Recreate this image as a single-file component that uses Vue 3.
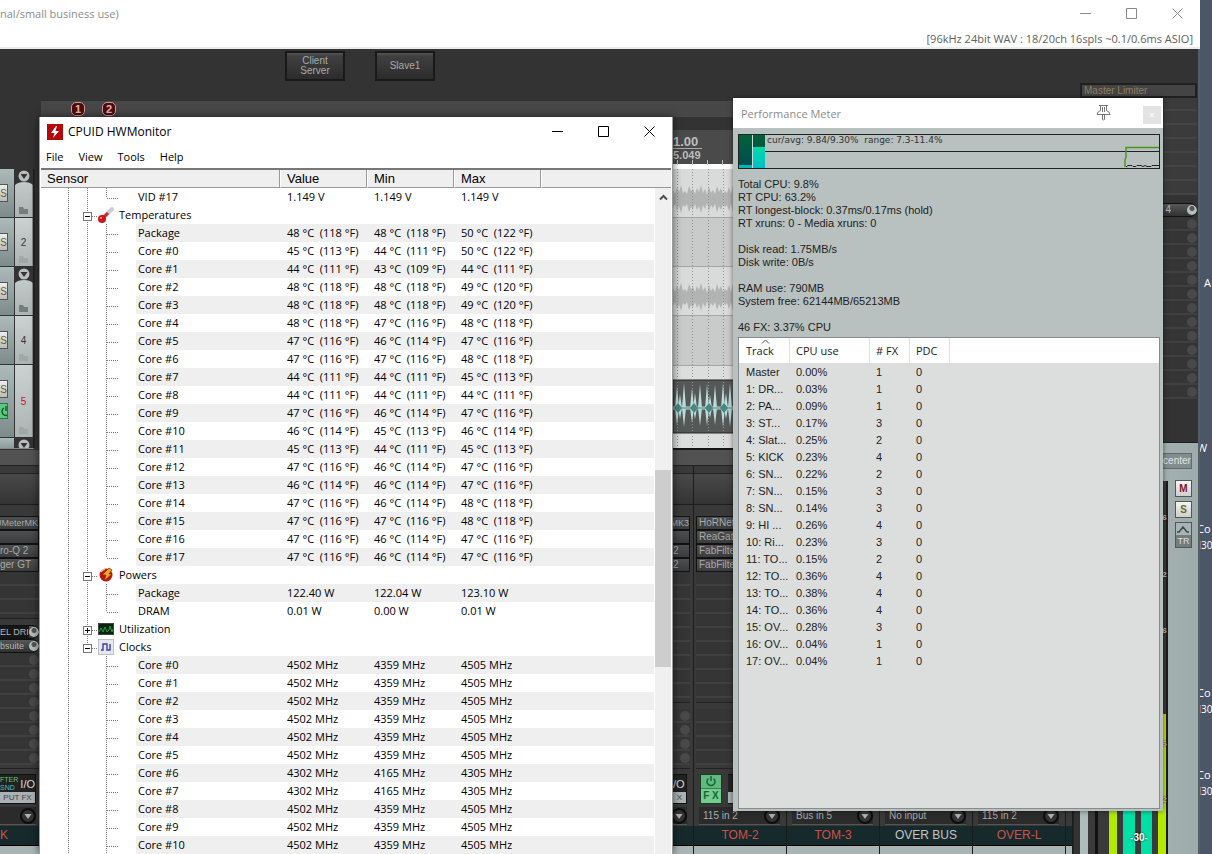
<script setup>
const temps = [
  ['Package', 48, 48, 50], ['Core #0', 45, 44, 50], ['Core #1', 44, 43, 44], ['Core #2', 48, 48, 49],
  ['Core #3', 48, 48, 49], ['Core #4', 48, 47, 48], ['Core #5', 47, 46, 47], ['Core #6', 47, 47, 48],
  ['Core #7', 44, 44, 45], ['Core #8', 44, 44, 44], ['Core #9', 47, 46, 47], ['Core #10', 46, 45, 46],
  ['Core #11', 45, 44, 45], ['Core #12', 47, 46, 47], ['Core #13', 46, 46, 47], ['Core #14', 47, 46, 48],
  ['Core #15', 47, 47, 48], ['Core #16', 47, 46, 47], ['Core #17', 47, 46, 47]
]
const fahrenheit = { 43: 109, 44: 111, 45: 113, 46: 114, 47: 116, 48: 118, 49: 120, 50: 122 }
const degrees = c => `${c} °C  (${fahrenheit[c]} °F)`
const clocks = Array.from({ length: 11 }, (_, i) => {
  const slow = i === 6 || i === 7
  return [`Core #${i}`, slow ? '4302 MHz' : '4502 MHz', slow ? '4165 MHz' : '4359 MHz', slow ? '4305 MHz' : '4505 MHz']
})

const leaves = (items, inner, open = false) =>
  items.map((values, i) => ({ values, shade: i % 2 === 0, inner, last: !open && i === items.length - 1 }))

const sensors = [
  { values: ['VID #17', '1.149 V', '1.149 V', '1.149 V'], inner: true, last: true },
  { group: 'Temperatures', icon: 'temp' },
  ...leaves(temps.map(t => [t[0], ...t.slice(1).map(degrees)]), true),
  { group: 'Powers', icon: 'power' },
  ...leaves([['Package', '122.40 W', '122.04 W', '123.10 W'], ['DRAM', '0.01 W', '0.00 W', '0.01 W']], true),
  { group: 'Utilization', icon: 'util', closed: true },
  { group: 'Clocks', icon: 'clock', end: true },
  ...leaves(clocks, false, true)
]

const stats = [
  'Total CPU: 9.8%', 'RT CPU: 63.2%', 'RT longest-block: 0.37ms/0.17ms (hold)', 'RT xruns: 0 - Media xruns: 0', '',
  'Disk read: 1.75MB/s', 'Disk write: 0B/s', '', 'RAM use: 790MB', 'System free: 62144MB/65213MB', '', '46 FX: 3.37% CPU'
]
const tracks = [
  ['Master', '0.00%', 1], ['1: DR...', '0.03%', 1], ['2: PA...', '0.09%', 1], ['3: ST...', '0.17%', 3],
  ['4: Slat...', '0.25%', 2], ['5: KICK', '0.23%', 4], ['6: SN...', '0.22%', 2], ['7: SN...', '0.15%', 3],
  ['8: SN...', '0.14%', 3], ['9: HI ...', '0.26%', 4], ['10: Ri...', '0.23%', 3], ['11: TO...', '0.15%', 2],
  ['12: TO...', '0.36%', 4], ['13: TO...', '0.38%', 4], ['14: TO...', '0.36%', 4], ['15: OV...', '0.28%', 3],
  ['16: OV...', '0.04%', 1], ['17: OV...', '0.04%', 1]
]

const strips = [
  { kind: 'first', fx: ['UMeterMK', '', 'ro-Q 2', 'ger GT'], sends: ['EL DRI', 'bsuite'], knobs: 8, name: 'K', red: true, input: '' },
  { kind: 'gap' },
  { kind: 'cut', fx: ['rMK3', '', '2', '2'], sends: [], knobs: 4, name: '', input: '' },
  { kind: 'full', fx: ['HoRNetVU', 'ReaGate', 'FabFilter', 'FabFilter'], sends: [], knobs: 4, name: 'TOM-2', red: true, input: '115 in 2' },
  { kind: 'full', fx: [], sends: [], knobs: 4, name: 'TOM-3', red: true, input: 'Bus in 5' },
  { kind: 'full', fx: [], sends: [], knobs: 4, name: 'OVER BUS', input: 'No input' },
  { kind: 'full', fx: [], sends: [], knobs: 4, name: 'OVER-L', red: true, input: '115 in 2' },
  { kind: 'edge' }
]

const tcp = [
  { kind: 'folder' }, { kind: 'plain', n: '2' }, { kind: 'folder' }, { kind: 'plain', n: '4' },
  { kind: 'armed', n: '5' }, { kind: 'stub' }
]

const heights = [9, 5, 12, 7, 14, 6, 8, 5, 13, 8, 10, 5, 11, 7, 14, 6, 10, 4, 12, 6, 9, 5, 13, 7, 11, 5, 8, 6, 12, 5, 14]
const wave = mid => {
  const top = heights.map((h, i) => `${i * 2},${mid - h}`)
  const bottom = heights.map((h, i) => `${i * 2},${mid + h}`).reverse()
  return [...top, ...bottom].join(' ')
}
const spikes = [[4, 22], [7, 14], [11, 25], [19, 20], [22, 15], [27, 24], [34, 24], [37, 13], [42, 23], [50, 25], [53, 15], [57, 25], [65, 20]]
const kick = spikes.map(([x, h]) => `M${x - 2},239 L${x},${239 - h} L${x + 2},239 L${x},${Math.round(239 + h * 0.75)} Z`).join(' ')
const hits = [5, 21, 36, 51].map(x => `M${x - 4},239 L${x},234 L${x + 4},239 L${x},244 Z`).join(' ')
</script>

<template>
  <div class="desktop">
    <span class="icon-label l1">A</span>
    <span class="icon-label l2">W</span>
    <span class="icon-label l3">Co<br><small>M30</small></span>
    <span class="icon-label l4">Co<br><small>M30</small></span>
    <span class="icon-label l5">Co<br><small>M30</small></span>

    <section class="daw">
      <header class="daw-title">
        <span>nal/small business use)</span>
        <div class="win-buttons">
          <button aria-label="Minimize"><svg width="11" height="11"><path d="M0 5.5H11" /></svg></button>
          <button aria-label="Maximize"><svg width="11" height="11"><path d="M.5.5H10.5V10.5H.5Z" /></svg></button>
          <button aria-label="Close"><svg width="11" height="11"><path d="M.5.5L10.5 10.5M10.5.5L.5 10.5" /></svg></button>
        </div>
      </header>
      <div class="daw-status">[96kHz 24bit WAV : 18/20ch 16spls ~0.1/0.6ms ASIO]</div>

      <div class="daw-body">
        <div class="main">
          <div class="toolbar">
            <button class="tool">Client<br>Server</button>
            <button class="tool">Slave1</button>
          </div>
          <div class="markers">
            <span class="marker">1</span>
            <span class="marker">2</span>
          </div>
          <div class="ruler">
            <div class="ruler-face">
              <b>1.00</b>
              <b class="time">5.049</b>
            </div>
          </div>
          <div class="arrange">
            <div class="tcp">
              <div v-for="(t, i) in tcp" :key="i" class="tcp-row" :class="t.kind">
                <div class="tcp-left">
                  <button v-if="t.kind !== 'stub'" class="solo">S</button>
                  <button v-if="t.kind === 'armed'" class="power" aria-label="FX power">
                    <svg width="12" height="12"><path d="M4 3A4 4 0 1 0 8 3M6 1V6" fill="none" stroke="#0a5b22" stroke-width="1.4" /></svg>
                  </button>
                </div>
                <div class="tcp-num">
                  <svg v-if="t.kind === 'folder' || t.kind === 'stub'" class="fold" width="18" height="16">
                    <path d="M0 0H18V16Q15 13 9 13Q3 13 0 16Z" fill="#333" />
                    <circle cx="9" cy="7" r="5.5" fill="#b9bdbd" /><path d="M5.500 5H12.500L9 10Z" fill="#333" />
                  </svg>
                  <span>{{ t.n }}</span>
                  <svg v-if="t.kind !== 'stub'" class="dir" width="9" height="7"><path d="M0 0H4L5 2H9V7H0Z" /></svg>
                </div>
              </div>
            </div>
            <svg class="items" width="100%" height="281" aria-hidden="true">
              <rect width="100%" height="281" fill="#c9cbcb" />
              <rect width="100%" height="48" fill="#d9dbdb" /><rect y="98" width="100%" height="48" fill="#d9dbdb" />
              <rect y="196" width="100%" height="85" fill="#dcdede" />
              <path d="M0 48.500H600M0 97.500H600M0 146.500H600M0 196.500H600" stroke="#a4a6a6" />
              <polygon :points="wave(30)" fill="#b2b4b4" /><polygon :points="wave(128)" fill="#b2b4b4" />
              <rect y="211" width="100%" height="53" fill="#565858" stroke="#222" />
              <path d="M4.500 0V281M19.500 0V281M35.500 0V281M50.500 0V281" stroke="#8e9090" stroke-dasharray="1 2" />
              <path d="M0 239H80" stroke="#b8dcd9" stroke-width="3" />
              <path :d="kick" fill="#b8dcd9" />
              <path d="M0 239H80" stroke="#4a8583" />
              <path :d="hits" fill="#4a8583" />
              <path d="M0 280H600" stroke="#161616" stroke-width="2" />
            </svg>
          </div>
          <div class="hscroll"></div>

          <div class="mixer">
            <div v-for="(s, i) in strips" :key="i" class="strip" :class="s.kind">
              <template v-if="s.fx">
                <div class="strip-head"></div>
                <div class="slots">
                  <div v-for="(f, k) in s.fx" :key="k" class="slot">{{ f }}</div>
                </div>
                <div class="sends">
                  <div v-for="f in s.sends" :key="f" class="send used"><span>{{ f }}</span><i></i></div>
                  <div v-for="k in s.knobs" :key="k" class="send"><i></i></div>
                </div>
                <div class="io">
                  <template v-if="s.kind === 'full'">
                    <button class="fx-on">
                      <svg width="12" height="11"><path d="M3.500 2.500A4 4 0 1 0 8.500 2.500M6 0V5" fill="none" stroke="#0d6a35" stroke-width="1.500" /></svg>
                      <span>F X</span>
                    </button>
                    <div class="io-box"></div>
                  </template>
                  <div v-else class="io-box">
                    <div class="io-top">
                      <span v-if="s.kind === 'first'" class="snd"><em>FTER</em><br>SND</span>
                      <span>{{ s.kind === 'first' ? 'I/O' : '/O' }}</span>
                    </div>
                    <div class="input-fx">{{ s.kind === 'first' ? 'PUT FX' : 'X' }}</div>
                  </div>
                </div>
                <div class="input">
                  <button><span>{{ s.input }}</span>
                    <svg width="16" height="16"><circle cx="8" cy="8" r="7" fill="#333" stroke="#0c0c0c" stroke-width="2" /><path d="M4.500 6H11.500L8 11Z" fill="#b0b0b0" /></svg>
                  </button>
                </div>
                <div class="name" :class="{ red: s.red }">{{ s.name }}</div>
                <div class="foot"></div>
              </template>
              <template v-else-if="s.kind === 'edge'">
                <div class="edge-fill"></div><div class="name"></div><div class="foot"></div>
              </template>
            </div>
          </div>
        </div>

        <aside class="master">
          <div class="master-fx">
            <div class="slot limiter">Master Limiter</div>
          </div>
          <div class="master-sends">
            <div class="send used"><span>4</span><i></i></div>
            <div v-for="k in 13" :key="k" class="send"><i></i></div>
          </div>
          <div class="master-panel">
            <div class="meter">
              <div class="bars"><i class="y"></i><i class="t"></i><i class="t"></i><i class="y"></i></div>
              <span class="db">-30-</span>
              <span class="db s1">6</span><span class="db s2">2</span><span class="db s3">6</span>
              <span class="db s4">6</span><span class="db s5">2</span>
            </div>
            <div class="controls">
              <span class="pan">center</span>
              <button class="mute">M</button>
              <button class="msolo">S</button>
              <button class="trim"><svg width="15" height="11"><path d="M1 8H3L7 3L11 8H13" fill="none" stroke="#3f4a4a" stroke-width="1.500" /></svg><span>TR</span></button>
            </div>
          </div>
        </aside>
      </div>
    </section>

    <section class="hw">
      <header class="hw-title">
        <svg width="16" height="16"><rect width="16" height="16" fill="#b3090d" /><path d="M9 2L4 9H7.500L6 14L12 7H8.500L10 2Z" fill="#fff" /></svg>
        <span>CPUID HWMonitor</span>
        <div class="win-buttons">
          <button aria-label="Minimize"><svg width="11" height="11"><path d="M0 5.500H11" /></svg></button>
          <button aria-label="Maximize"><svg width="11" height="11"><path d="M.5.5H10.5V10.5H.5Z" /></svg></button>
          <button aria-label="Close"><svg width="11" height="11"><path d="M.5.5L10.5 10.5M10.5.5L.5 10.5" /></svg></button>
        </div>
      </header>
      <nav class="hw-menu">
        <button>File</button><button>View</button><button>Tools</button><button>Help</button>
      </nav>
      <div class="hw-list">
        <table>
          <colgroup><col class="c-sensor"><col class="c-val"><col class="c-val"><col class="c-val"><col></colgroup>
          <thead><tr><th>Sensor</th><th>Value</th><th>Min</th><th>Max</th><th></th></tr></thead>
          <tbody>
            <tr v-for="(r, i) in sensors" :key="i" :class="{ shade: r.shade, group: r.group }">
              <td>
                <div class="node">
                  <svg :width="r.group ? 78 : 97" height="18" class="tree">
                    <path d="M27.500 0V18" />
                    <template v-if="r.group">
                      <path :d="r.end ? 'M46.500 0V6' : 'M46.500 0V18'" /><path d="M51 10.500H57" />
                      <rect x="42.500" y="6.500" width="8" height="8" fill="#fff" stroke="#777" />
                      <path class="sign" :d="r.closed ? 'M44 10.500H49M46.500 8V13' : 'M44 10.500H49'" />
                      <g v-if="r.icon === 'temp'" class="glyph">
                        <path d="M64 10L71 3" stroke="#c9cdd2" stroke-width="4" stroke-linecap="round" /><path d="M61 13L67 7" stroke="#d8242a" stroke-width="3" />
                        <circle cx="61" cy="13" r="4" fill="#d3141b" /><circle cx="60" cy="12" r="1" fill="#ffb0b0" />
                      </g>
                      <g v-else-if="r.icon === 'power'" class="glyph">
                        <circle cx="65" cy="9" r="6.500" fill="#bb1712" /><path d="M68 2L61 9H65L63 15L71 8H68L71 4Z" fill="#f7a51c" stroke="#8a1c08" stroke-width=".7" />
                        <path d="M60 6Q61 4 64 3" stroke="#ffc0a8" stroke-width="1.500" fill="none" />
                      </g>
                      <g v-else-if="r.icon === 'util'" class="glyph">
                        <rect x="57.500" y="3.500" width="15" height="11" fill="#092313" stroke="#444" /><path d="M58 12L60 8L62 12L64 7L66 12L68 10L69 6L71 12L72 9" stroke="#1f9d3a" fill="none" />
                      </g>
                      <g v-else class="glyph">
                        <rect x="57.500" y="1.500" width="15" height="15" fill="#e6e8ee" stroke="#bcbfc6" /><path d="M60 12H62V6H66V12H69V6" stroke="#3b3f9c" stroke-width="1.400" fill="none" />
                      </g>
                    </template>
                    <template v-else>
                      <path v-if="r.inner" d="M46.500 0V18" />
                      <path :d="r.last ? 'M65.500 0V10' : 'M65.500 0V18'" /><path d="M66 10.500H77" />
                    </template>
                  </svg>
                  <span>{{ r.group || r.values[0] }}</span>
                </div>
              </td>
              <td>{{ r.values?.[1] }}</td><td>{{ r.values?.[2] }}</td><td>{{ r.values?.[3] }}</td><td></td>
            </tr>
          </tbody>
        </table>
        <div class="vscroll">
          <button aria-label="Scroll up"><svg width="9" height="7"><path d="M1 5.500L4.500 2L8 5.500" fill="none" stroke="#505050" stroke-width="2" /></svg></button>
          <div class="thumb"></div>
        </div>
      </div>
    </section>

    <section class="perf">
      <header class="perf-title">
        <span>Performance Meter</span>
        <button class="pin" aria-label="Pin">
          <svg width="15" height="17"><path d="M3 1.500H12M4.500 2V6.500Q1.500 7.500 1 10.500H14Q13.500 7.500 10.500 6.500V2M6.500 3V8M8.500 3V8M6.500 11V15.500L7.500 16L8.500 15.500V11" fill="none" stroke="#777" /></svg>
        </button>
        <button class="close" aria-label="Close">×</button>
      </header>
      <div class="perf-body">
        <div class="graph">
          <div class="cpu a"></div><div class="cpu b"></div>
          <span>cur/avg: 9.84/9.30%&nbsp; range: 7.3-11.4%</span>
          <svg width="35" height="33"><path d="M1 32V25L2 22V12.500H35" fill="none" stroke="#4c9425" stroke-width="1.500" /><path d="M2 32L4 30.500H8L9 31.500H12L13 30.500H17L19 31.500L21 30.500L23 31.500H27L28 30.500H35" fill="none" stroke="#222" /></svg>
        </div>
        <div class="stats"><div v-for="(s, i) in stats" :key="i">{{ s }}</div></div>
        <div class="tracks">
          <table>
            <colgroup><col class="t1"><col class="t2"><col class="t3"><col class="t3"><col></colgroup>
            <thead><tr><th>Track<svg width="9" height="5"><path d="M1 4.500L4.500 1L8 4.500" fill="none" stroke="#555" /></svg></th><th>CPU use</th><th># FX</th><th>PDC</th><th></th></tr></thead>
            <tbody><tr v-for="t in tracks" :key="t[0]"><td>{{ t[0] }}</td><td>{{ t[1] }}</td><td>{{ t[2] }}</td><td>0</td><td></td></tr></tbody>
          </table>
        </div>
      </div>
    </section>
  </div>
</template>

<style>
body { margin: 0; }
</style>

<style scoped>
* { box-sizing: border-box; }
.desktop {
  position: relative; height: 100vh; overflow: hidden; background: #4b5767;
  font-family: "Liberation Sans", Arial, sans-serif; font-size: 11px; color: #111;
}
button { font: inherit; color: inherit; padding: 0; margin: 0; border: 0; background: none; }
svg { display: block; flex: none; }
table { border-collapse: separate; border-spacing: 0; table-layout: fixed; width: 100%; }
th, td { padding: 0; font-weight: normal; text-align: left; white-space: nowrap; }

.icon-label { position: absolute; left: calc(100% - 15px); color: #fff; font: 11px/16px "Open Sans", sans-serif; }
.icon-label small { display: block; margin-left: -5px; font-size: 10px; }
.l1 { top: 275px; left: calc(100% - 8px); }
.l2 { top: 440px; }
.l3 { top: 521px; }
.l4 { top: 685px; }
.l5 { top: 767px; }

.daw { position: absolute; inset: 0 12px 0 0; display: flex; flex-direction: column; background: #fff; }
.daw-title { display: flex; justify-content: space-between; height: 27px; line-height: 28px; color: #8c8c8c; font-family: "Open Sans", sans-serif; font-size: 11px; }
.win-buttons { display: flex; }
.win-buttons button { width: 46px; display: grid; place-items: center; }
.win-buttons path { fill: none; stroke: currentColor; }
.daw-title .win-buttons { color: #888; }
.daw-status { height: 22px; padding-right: 7px; border-bottom: 2px solid #ececec; text-align: right; line-height: 24px; color: #606060; font-family: "Open Sans", sans-serif; font-size: 11px; }
.daw-body { flex: 1; min-height: 0; display: flex; background: #333; }
.main { flex: 1; min-width: 0; display: flex; flex-direction: column; }
.toolbar { height: 52px; flex: none; display: flex; gap: 30px; padding: 2px 0 0 285px; }
.tool { width: 60px; height: 30px; border: 2px solid #191919; background: linear-gradient(#555, #404040 3px, #2c2c2c); color: #aaa; font-size: 10px; line-height: 10px; }
.markers { height: 16px; flex: none; margin-left: 41px; padding: 1px 0 0 30px; display: flex; gap: 17px; background: #474747; }
.marker { width: 14px; height: 14px; border: 1px solid #c99; border-radius: 5px; background: #510a0c; color: #e2b8b8; font-size: 11px; font-weight: bold; line-height: 12px; text-align: center; }
.ruler { height: 52px; flex: none; padding: 13px 0 0 673px; }
.ruler-face { height: 39px; background: repeating-linear-gradient(to right, transparent 0 4px, #bbb 4px 5px, transparent 5px 15px) 0 30px / 100% 5px no-repeat, linear-gradient(#4a4a4a 34px, #fff 34px); color: #bdbdbd; }
.ruler-face b { display: block; width: 29px; padding-top: 5px; font-size: 13px; line-height: 13px; border-bottom: 1px solid #aaa; }
.ruler-face .time { border: 0; padding-top: 0; font-size: 11px; width: auto; }

.arrange { flex: none; height: 281px; display: grid; grid-template-columns: 41px 632px 1fr; }
.items { grid-column: 3; min-width: 0; }
.tcp { margin-right: 6px; border-right: 2px solid #222; border-bottom: 1px solid #888; height: 280px; overflow: hidden; }
.tcp-row { height: 49px; display: flex; border-bottom: 1px solid #333; }
.tcp-row.armed { height: 73px; }
.tcp-row.stub { height: 11px; overflow: hidden; }
.tcp-left { width: 15px; flex: none; border-right: 1px solid #333; background: linear-gradient(#adbaba, #7d8b8b); padding-top: 15px; }
.solo { display: block; width: 8px; height: 18px; border: 1px solid #555; border-left: 0; background: linear-gradient(#eee, #bbb); color: #66621c; font-size: 10px; overflow: hidden; direction: rtl; }
.power { display: grid; place-items: center end; width: 8px; height: 16px; margin-top: 5px; border: 1px solid #275; border-left: 0; background: #5fc880; overflow: hidden; }
.tcp-num { flex: 1; position: relative; display: grid; place-items: center; background: linear-gradient(#ccd2d2, #abb3b3); font-size: 10px; color: #333; border-right: 1px solid #888; }
.armed .tcp-num { color: #c21a22; }
.fold { position: absolute; top: 0; left: 0; }
.dir { position: absolute; left: 4px; bottom: 3px; fill: #a0a7a7; }
.folder .dir { fill: #777d7d; }
.hscroll { height: 16px; flex: none; background: #525252; border-bottom: 1px solid #222; }

.mixer { flex: 1; min-height: 0; margin-right: 5px; display: grid; grid-template-columns: 43px 630px 21px repeat(4, 93px) 1fr; border-right: 1px solid #222; overflow: hidden; }
.strip { display: flex; flex-direction: column; min-width: 0; overflow: hidden; border-right: 1px solid #1c1c1c; background: #393939; }
.strip-head { height: 39px; flex: none; border-top: 7px solid #3a3a3a; border-bottom: 1px solid #1e1e1e; background: linear-gradient(#4a4a4a, #343434); box-shadow: inset 0 1px #222; }
.slots { flex: 1; margin: 11px 3px 6px 2px; border-bottom: 1px solid #222; overflow: hidden; background: repeating-linear-gradient(#353535 0 12px, #404040 12px 14px) ; }
.slot { height: 14px; border: 1px solid #121212; background: linear-gradient(#4d4f50, #3a3c3d); color: #a8a8a8; font-size: 10px; line-height: 12px; padding-left: 2px; white-space: nowrap; overflow: hidden; }
.first .slots, .first .sends, .cut .slots, .cut .sends { margin-left: 0; }
.first .slot, .cut .slot { padding-left: 0; border-left: 0; }
.first .slot:first-child, .cut .slot:first-child { display: flex; justify-content: flex-end; font-size: 9px; }
.sends { margin: 0 3px 0 2px; border-bottom: 1px solid #222; padding-bottom: 3px; }
.send { height: 14px; display: flex; align-items: center; justify-content: flex-end; background: linear-gradient(#353535 12px, #404040 12px); }
.send i { width: 10px; height: 10px; border-radius: 50%; background: #484a49; flex: none; }
.send.used { justify-content: space-between; border: 1px solid #111; border-width: 1px 0; border-radius: 0 7px 7px 0; background: linear-gradient(#555858, #303232); color: #b5b5b5; font-size: 10px; line-height: 12px; overflow: hidden; white-space: nowrap; }
.first .send.used { font-size: 9px; }
.first .send:first-child span { background: #161616; }
.send.used span { min-width: 0; overflow: hidden; }
.send.used i { background: radial-gradient(circle at 50% 35%, #555 0 2px, #b5bfbf 3px); }
.io { height: 35px; flex: none; display: flex; gap: 6px; padding: 5px 6px 0; }
.first .io, .cut .io { padding-left: 0; }
.fx-on { width: 22px; height: 30px; border: 1px solid #1c3a28; background: linear-gradient(#63b87f 13px, #3c7c52 13px 14px, #74cc8e 14px); color: #0d6a35; display: flex; flex-direction: column; align-items: center; gap: 1px; padding-top: 1px; font-size: 10px; font-weight: bold; line-height: 15px; white-space: nowrap; }
.io-box { flex: 1; min-width: 0; height: 30px; border: 1px solid #111; border-left: 0; background: linear-gradient(#222 17px, #a9b2b4 17px); color: #ddd; font-size: 11px; }
.io-top { height: 17px; display: flex; justify-content: space-between; align-items: center; }
.snd { font-size: 7px; line-height: 8px; color: #51c0ba; }
.snd em { font-style: normal; color: #6cc070; }
.input-fx { color: #444; font-size: 8px; line-height: 11px; text-align: center; white-space: nowrap; }
.input { height: 22px; flex: none; padding: 3px 6px 1px 5px; }
.first .input, .cut .input { padding-left: 0; }
.input button { width: 100%; height: 18px; display: flex; align-items: center; justify-content: space-between; padding-left: 4px; border-bottom: 1px solid #555; background: #2b2b2b; color: #aaa; font-size: 10px; white-space: nowrap; }
.cut .input button { padding: 0; justify-content: flex-end; }
.name { height: 20px; flex: none; background: #162a2c; border-bottom: 1px solid #000; color: #c4c4c4; font-size: 12px; line-height: 18px; text-align: center; }
.first .name { text-align: left; }
.name.red { color: #cf5148; }
.foot { height: 8px; flex: none; background: #a9b5b5; }
.edge-fill { flex: 1; }

.master { width: 121px; flex: none; display: flex; flex-direction: column; border-right: 2px solid #555e62; }
.master-fx { flex: none; margin: 34px 1px 5px; background: repeating-linear-gradient(#3b3b3b 0 12px, #444 12px 14px) 0 0 / 100% 112px no-repeat; height: 115px; }
.limiter { height: 15px; color: #917d5f; border: 2px solid #202020; background: #444; line-height: 11px; padding-left: 2px; }
.master-sends { flex: none; margin: 0 1px 0 0; height: 239px; }
.master-sends .send.used { justify-content: flex-end; gap: 16px; }
.master-panel { flex: 1; min-height: 0; margin-left: 1px; display: flex; border-top: 1px solid #202020; background: linear-gradient(to right, #b0bcbc, #9eabab); }
.meter { position: relative; width: 80px; flex: none; margin: 38px 0 0 8px; border-right: 2px solid #1b1b1b; background: linear-gradient(to right, #3a3a3a 7px, #111 7px 10px, #3a3a3a 10px); }
.bars { position: absolute; inset: 233px 0 0 21px; display: flex; gap: 6px; }
.bars i { width: 12px; background: #00e0a5; }
.bars .y { width: 8px; background: linear-gradient(#cbd40a, #b3ea00 60px); }
.db { position: absolute; right: 15px; bottom: 9px; width: 24px; text-align: center; color: #fff; font-size: 10px; font-weight: bold; line-height: 14px; text-shadow: 0 0 2px #000; }
.s1, .s2, .s3, .s4, .s5 { right: -1px; width: 5px; bottom: auto; font-size: 8px; color: #ccc; }
.s1 { top: 30px; }
.s2 { top: 87px; }
.s3 { top: 143px; }
.s4 { top: 256px; }
.s5 { top: 312px; }
.controls { flex: 1; min-width: 0; display: flex; flex-direction: column; align-items: flex-end; padding: 10px 6px 0 0; }
.pan { flex: none; width: 30px; height: 16px; margin-bottom: 11px; border: 1px solid #667; background: #828e8e; color: #e0e5e5; font-size: 10px; line-height: 14px; text-align: center; position: relative; }
.mute, .msolo, .trim { width: 17px; height: 17px; margin-bottom: 4px; border: 1px solid #555; background: linear-gradient(#f4f4f4, #cfcfcf); font-size: 10px; font-weight: bold; color: #7c1822; }
.msolo { color: #6d6920; }
.trim { height: 26px; background: linear-gradient(#a9b4b4 12px, #737d7d 12px); color: #dde; font-size: 9px; font-weight: normal; line-height: 12px; }

.hw { position: absolute; left: 39px; top: 117px; bottom: 0; width: 634px; background: #fff; border: solid #999; border-width: 0 1px; box-shadow: 0 0 8px #0009; font-family: "Open Sans", sans-serif; font-size: 12px; color: #000; display: flex; flex-direction: column; }
.hw-title { height: 29px; flex: none; display: flex; align-items: center; gap: 5px; padding-left: 7px; }
.hw-title .win-buttons { margin-left: auto; align-self: stretch; }
.hw-menu { height: 22px; flex: none; display: flex; gap: 15px; padding: 0 0 2px 6px; font-size: 11px; }
.hw-list { flex: 1; min-height: 0; position: relative; overflow: hidden; margin: 0 1px; border-top: 2px solid #777; }
.hw-list th { height: 18px; padding-left: 6px; background: #efefef; border-right: 1px solid #fff; border-bottom: 1px solid #999; box-shadow: inset -1px 0 #999; font: 13px/16px "Liberation Sans", Arial, sans-serif; }
.hw-list th:last-child { border-right: 0; box-shadow: none; }
.c-sensor { width: 240px; }
.c-val { width: 87px; }
.hw-list td { height: 18px; padding-left: 6px; line-height: 18px; font-size: 11px; white-space: pre; }
.hw-list td:first-child { padding: 0; }
.shade td { background: #efefef; }
.shade td:first-child { background: linear-gradient(to right, transparent 95px, #efefef 95px); }
.node { display: flex; height: 18px; }
.tree path { fill: none; stroke: #777; stroke-dasharray: 1 1; }
.tree .sign { stroke: #000; stroke-dasharray: none; }
.tree .glyph path { stroke: revert-layer; stroke-dasharray: none; fill: revert-layer; }
.vscroll { position: absolute; right: 0; top: 18px; bottom: 0; width: 17px; background: #f0f0f0; border-left: 1px solid #fff; }
.vscroll button { width: 16px; height: 18px; display: grid; place-items: center; }
.thumb { height: 197px; margin-top: 264px; background: #cdcdcd; }

.perf { position: absolute; left: 733px; top: 98px; width: 430px; height: 713px; background: #b9c0c0; box-shadow: 0 0 5px #0008; display: flex; flex-direction: column; }
.perf-title { height: 30px; flex: none; display: flex; align-items: center; background: #fff; padding: 0 2px 0 8px; color: #8c8c8c; font-family: "Open Sans", sans-serif; font-size: 11px; }
.perf-title .pin { margin: 0 32px 2px auto; }
.close { width: 18px; height: 18px; margin-top: 3px; background: #e3e3e3; color: #fff; line-height: 16px; }
.perf-body { flex: 1; min-height: 0; display: flex; flex-direction: column; padding: 6px 3px 2px 5px; }
.graph { height: 35px; flex: none; display: flex; border: 1px solid #222; background: linear-gradient(#222, #222) 0 16px / 100% 1px no-repeat; color: #333; font: 9px/11px "DejaVu Sans", sans-serif; white-space: pre; }
.graph svg { margin-left: auto; }
.cpu { width: 14px; flex: none; background: linear-gradient(#006338, #004d50 30px, #00b9b5 30px); border-right: 1px solid #cdd; }
.cpu.b { width: 12px; border: 0; margin-right: 2px; background: linear-gradient(#006338, #00563f 12px, #00dcaa 12px, #00bfc8); }
.stats { padding: 9px 0 3px; line-height: 13px; color: #222; }
.stats div { height: 13px; }
.tracks { flex: 1; min-height: 0; border: 1px solid #858b8e; background: #dcdedd; overflow: hidden; }
.tracks th { position: relative; height: 25px; padding-left: 6px; background: #fff; border-right: 1px solid #e2e2e2; font-family: "Open Sans", sans-serif; color: #222; }
.tracks th:last-child { border: 0; }
.tracks th svg { position: absolute; top: 1px; left: 22px; }
.tracks td { height: 17px; padding-left: 6px; color: #222; }
.tracks td:first-child, .tracks th:first-child { padding-left: 7px; }
.t1 { width: 51px; }
.t2 { width: 80px; }
.t3 { width: 40px; }
</style>
